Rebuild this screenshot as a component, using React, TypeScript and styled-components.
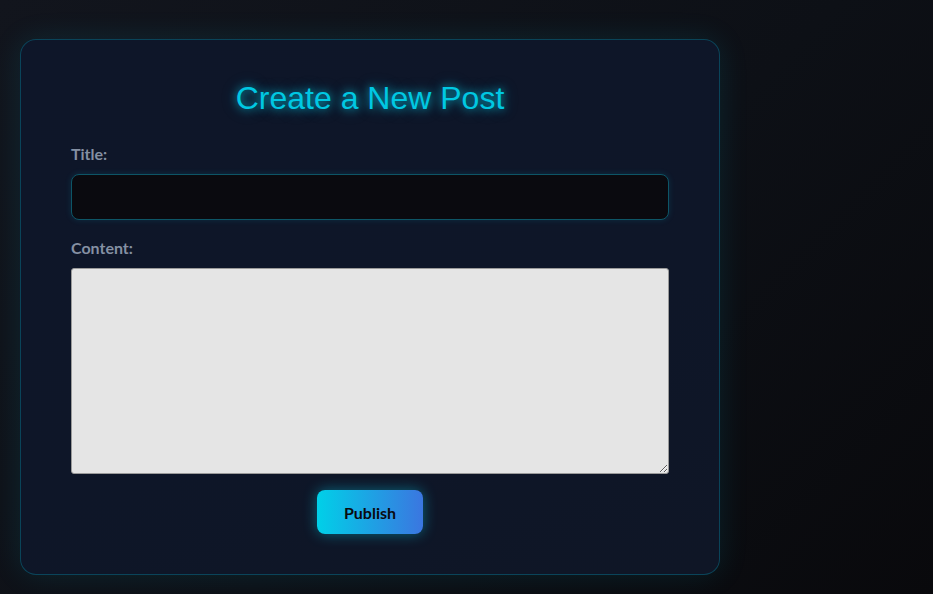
import { FC, useState } from "react";
import styled, { createGlobalStyle } from "styled-components";

const GlobalStyle = createGlobalStyle`
  html, body {
    margin: 0;
    padding: 0;
    min-height: 100%;
  }
  body {
    background: linear-gradient(135deg, #12151d 0%, #0d1016 55%, #09090c 100%);
    min-height: 594px;
  }
`;

const App: FC = () => {
  const [title, setTitle] = useState<string>("");
  const [content, setContent] = useState<string>("");

  return (
    <StyledPage>
      <GlobalStyle />
      <StyledCard>
        <StyledHeading>Create a New Post</StyledHeading>
        <StyledForm onSubmit={(e) => e.preventDefault()}>
          <StyledLabel htmlFor="title">Title:</StyledLabel>
          <StyledInput
            id="title"
            value={title}
            onChange={(e) => setTitle(e.currentTarget.value)}
          />
          <StyledLabel htmlFor="content">Content:</StyledLabel>
          <StyledTextarea
            id="content"
            value={content}
            onChange={(e) => setContent(e.currentTarget.value)}
          />
          <StyledButton type="submit">Publish</StyledButton>
        </StyledForm>
      </StyledCard>
    </StyledPage>
  );
};

export default App;

const StyledPage = styled.div`
  padding: 39px 20px 20px;
  display: flex;
  align-items: flex-start;
`;

const StyledCard = styled.div`
  width: 700px;
  box-sizing: border-box;
  padding: 40px 50px 40px;
  background: linear-gradient(160deg, #0e1629 0%, #0e1628 60%, #0f1626 100%);
  border: 1px solid rgba(0, 190, 220, 0.28);
  border-radius: 16px;
  box-shadow: 0 0 30px rgba(0, 190, 220, 0.12);
`;

const StyledHeading = styled.h1`
  margin: 0 0 27px;
  text-align: center;
  font-family: "Liberation Sans", Arial, sans-serif;
  font-weight: 400;
  font-size: 32px;
  line-height: 37px;
  color: #00c8e2;
  text-shadow: 0 0 8px rgba(0, 210, 240, 0.75), 0 0 16px rgba(0, 200, 230, 0.35);
`;

const StyledForm = styled.form`
  display: flex;
  flex-direction: column;
`;

const StyledLabel = styled.label`
  display: block;
  margin-bottom: 10px;
  font-family: Lato, "Noto Sans", sans-serif;
  font-weight: 700;
  font-size: 16px;
  line-height: 20px;
  color: #8590a3;
`;

const StyledInput = styled.input`
  box-sizing: border-box;
  width: 100%;
  height: 46px;
  margin: 0 0 18px;
  padding: 0 12px;
  background: #0a0a0f;
  color: #e0e0e0;
  border: 1px solid #0d5566;
  border-radius: 8px;
  box-shadow: 0 0 6px rgba(0, 190, 220, 0.15);
  font-size: 15px;
  outline: none;
`;

const StyledTextarea = styled.textarea`
  box-sizing: border-box;
  width: 100%;
  height: 206px;
  margin: 0 0 16px;
  padding: 8px;
  background: #e5e5e5;
  border: 1px solid #9a9a9a;
  border-radius: 3px;
  font-size: 15px;
  resize: vertical;
  outline: none;
`;

const StyledButton = styled.button`
  align-self: center;
  height: 44px;
  padding: 0 27px;
  border: none;
  border-radius: 8px;
  background: linear-gradient(90deg, #00d0e8 0%, #3b76e0 100%);
  box-shadow: 0 0 14px rgba(0, 200, 230, 0.45);
  color: #0a0a0f;
  font-family: Lato, "Noto Sans", sans-serif;
  font-weight: 700;
  font-size: 16px;
  cursor: pointer;
`;
